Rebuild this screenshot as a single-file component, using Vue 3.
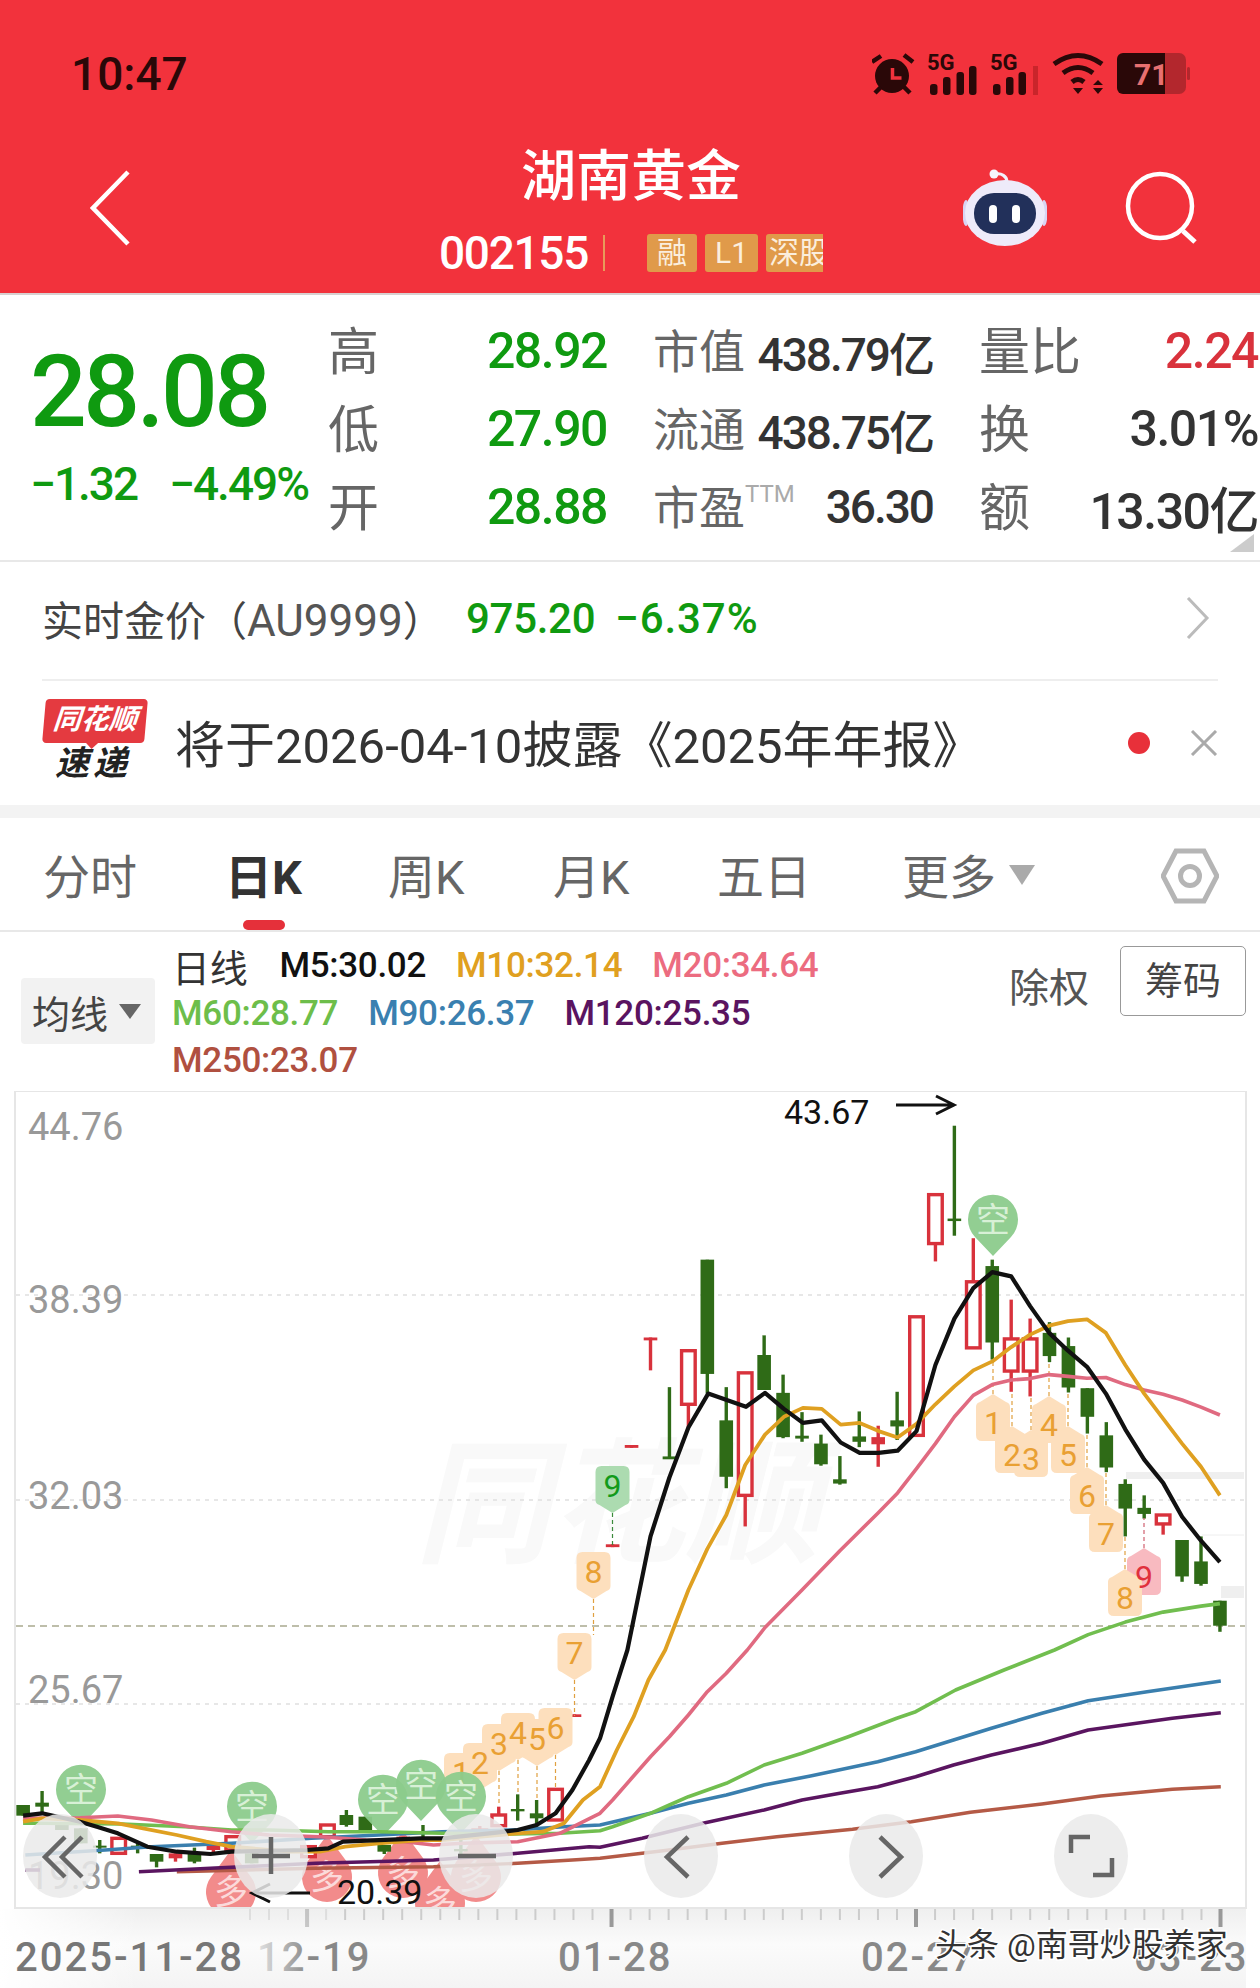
<script setup>
const z4 = (p) => [600 + p[0] / 2.376, 1090 + p[1] / 2.8]
const z5 = (p) => [p[0] / 2.376, 1650 + p[1] / 3]
const z6 = (p) => [600 + p[0] / 2.376, 1650 + p[1] / 3]
const toPts = (arr) => arr.map((p) => p[0].toFixed(1) + ',' + p[1].toFixed(1)).join(' ')

const lines = [
  { c: '#b45a46', w: 3.4, pts: [[[420,665],[750,655],[1030,650],[1230,640],[1360,630]].map(z5), [[0,625],[150,602],[290,580],[420,560],[600,538],[740,515],[880,487],[1050,462],[1190,438],[1360,418],[1475,410]].map(z6)].flat() },
  { c: '#5a1560', w: 3.6, pts: [[[330,665],[500,655],[750,640],[1030,630],[1230,610],[1400,590]].map(z5), [[0,592],[100,565],[250,518],[390,480],[480,450],[570,430],[660,410],[750,380],[840,345],[930,315],[1050,280],[1160,240],[1360,205],[1475,188]].map(z6)].flat() },
  { c: '#5a1560', w: 3.6, pts: [[60,660],[95,660]].map(z5) },
  { c: '#3a7fae', w: 3.6, pts: [[[60,615],[250,600],[360,590],[550,580],[740,565],[900,555],[1050,545],[1220,540],[1340,530]].map(z5), [[0,525],[120,490],[210,460],[300,435],[390,405],[500,378],[660,335],[750,305],[840,270],[930,235],[1050,190],[1160,152],[1300,125],[1475,93]].map(z6)].flat() },
  { c: '#71be4f', w: 3.6, pts: [[[55,520],[100,520],[290,522],[440,530],[550,540],[640,540],[780,545],[900,545],[1050,550],[1220,552],[1330,550]].map(z5), [[0,542],[30,530],[75,510],[120,490],[165,465],[210,440],[300,400],[390,345],[480,310],[590,260],[705,205],[750,185],[845,120],[960,60],[1080,0]].map(z6), [[1160,1525],[1248,1490],[1338,1462],[1428,1445],[1473,1438]].map(z4)].flat() },
  { c: '#e06a80', w: 3.6, pts: [[[55,505],[190,503],[280,498],[360,510],[450,530],[550,545],[640,555],[760,560],[870,570],[960,575],[1030,585],[1100,580],[1230,575],[1330,550],[1410,500]].map(z5), [[0,490],[30,450],[75,385],[120,320],[165,260],[210,195],[255,125],[300,70],[350,0]].map(z6), [[392,1505],[480,1400],[570,1290],[660,1185],[707,1128],[752,1060],[797,990],[842,915],[887,855],[932,825],[977,812],[1022,808],[1067,797],[1112,802],[1157,807],[1202,805],[1248,825],[1293,840],[1338,852],[1383,868],[1428,888],[1473,910]].map(z4)].flat() },
  { c: '#dfa021', w: 3.8, pts: [[[55,515],[100,505],[190,510],[280,520],[340,535],[420,555],[490,575],[550,590],[690,605],[760,605],[820,590],[900,580],[1000,570],[1050,570],[1230,550],[1290,545],[1340,520],[1385,450]].map(z5), [[0,410],[40,300],[80,200],[115,90],[155,0]].map(z6), [[210,1400],[255,1285],[300,1190],[345,1050],[392,965],[437,915],[482,890],[527,893],[572,937],[617,932],[662,955],[707,973],[752,935],[797,880],[842,830],[887,785],[932,760],[977,720],[1022,685],[1067,660],[1112,647],[1157,642],[1202,680],[1248,770],[1293,850],[1338,920],[1383,990],[1428,1055],[1473,1135]].map(z4)].flat() },
  { c: '#111', w: 4.2, pts: [[[55,497],[100,490],[190,515],[230,530],[280,550],[350,590],[420,605],[500,612],[550,605],[730,600],[780,595],[815,575],[1000,565],[1050,565],[1185,547],[1230,540],[1275,525],[1320,490],[1360,420],[1400,330]].map(z5), [[0,265],[30,140],[65,0]].map(z6), [[120,1250],[165,1085],[210,945],[257,850],[347,887],[392,848],[437,893],[482,932],[527,925],[572,987],[617,1016],[662,1016],[707,1010],[752,955],[797,770],[842,640],[887,555],[932,510],[977,522],[1022,605],[1067,680],[1112,730],[1157,775],[1202,850],[1248,950],[1293,1035],[1338,1100],[1383,1195],[1428,1262],[1473,1322]].map(z4)].flat() },
].map((l) => ({ c: l.c, w: l.w, pts: toPts(l.pts) }))

const c4 = [
  [30,1272,1280,null,null,'f'],[75,994,1002,null,null,'f'],[120,693,701,693,785,'f'],
  [165,1026,1034,832,1030,'g'],[210,730,880,null,945,'r'],[255,475,795,null,850,'g'],
  [300,925,1083,832,1115,'g'],[345,792,1135,null,1222,'r'],[390,742,840,687,null,'g'],
  [435,848,972,797,975,'g'],[480,968,976,902,985,'g'],[525,990,1048,965,1052,'g'],
  [570,1090,1102,1025,1105,'g'],[616,970,985,900,1000,'g'],[661,972,992,940,1055,'f'],
  [706,925,942,845,980,'g'],[752,635,967,null,null,'r'],[797,293,430,null,480,'r'],
  [842,360,367,100,408,'g'],[887,537,722,415,null,'r'],[932,493,707,475,755,'g'],
  [977,697,787,587,845,'r'],[1022,697,787,640,858,'r'],[1068,680,745,650,762,'g'],
  [1113,717,833,693,847,'g'],[1158,835,915,null,962,'g'],[1203,967,1057,930,1070,'g'],
  [1248,1103,1172,1090,1250,'g'],[1293,1170,1187,1135,1200,'g'],[1338,1190,1215,null,1245,'r'],
  [1383,1260,1362,null,1377,'g'],[1428,1320,1383,1250,1388,'g'],[1473,1430,1500,null,1517,'g'],
]
const c5 = [
  [1365,193,201,null,null,'f'],[1320,418,510,null,null,'r'],[1275,490,505,450,530,'g'],
  [1230,477,484,433,512,'g'],[1185,495,527,470,null,'r'],[1140,540,552,528,null,'r'],
  [1095,597,604,570,615,'g'],[1005,565,572,525,null,'g'],[958,560,575,null,null,'f'],
  [913,585,605,null,612,'g'],[868,500,545,null,null,'g'],[823,495,525,480,530,'g'],
  [778,525,560,null,null,'r'],[733,590,620,null,null,'r'],[598,610,640,null,null,'g'],
  [553,560,600,null,null,'r'],[507,585,600,null,615,'f'],[462,610,635,593,640,'g'],
  [417,610,625,null,635,'f'],[372,612,635,null,652,'g'],[327,587,593,575,610,'g'],
  [282,565,610,null,null,'r'],[237,587,593,570,610,'g'],[192,535,580,null,null,'g'],
  [147,525,540,null,null,'g'],[100,458,470,423,490,'g'],[55,465,497,null,null,'g'],
]
const candles = [...c4.map((c) => [c, z4]), ...c5.map((c) => [c, z5])].map(([c, z]) => {
  const x = z([c[0], 0])[0]
  const y = (v) => z([0, v])[1]
  const top = y(c[1]); const bot = y(c[2])
  return {
    x, top, h: bot - top,
    wt: c[3] == null ? top : y(c[3]),
    wb: c[4] == null ? bot : y(c[4]),
    t: c[5],
  }
})

function tipDown(cx, top) {
  const l = cx - 17; const r = cx + 17; const b = top + 38
  return `M${l + 6} ${top}H${r - 6}Q${r} ${top} ${r} ${top + 6}V${b - 4}Q${r} ${b} ${r - 4} ${b + 1}L${cx} ${b + 9}L${l + 4} ${b + 1}Q${l} ${b} ${l} ${b - 4}V${top + 6}Q${l} ${top} ${l + 6} ${top}Z`
}
function tipUp(cx, top) {
  const l = cx - 17; const r = cx + 17; const t = top + 9; const b = t + 38
  return `M${cx} ${top}L${r - 4} ${t - 1}Q${r} ${t} ${r} ${t + 4}V${b - 6}Q${r} ${b} ${r - 6} ${b}H${l + 6}Q${l} ${b} ${l} ${b - 6}V${t + 4}Q${l} ${t} ${l + 4} ${t - 1}Z`
}
const O = { bg: '#fddfbd', fg: '#e9a033' }
const badges = [
  { n: 1, x: 461, cy: 1772, dir: 'd', ...O }, { n: 2, x: 480, cy: 1762, dir: 'd', ...O },
  { n: 3, x: 499, cy: 1743, dir: 'd', conn: 1806, ...O }, { n: 5, x: 537, cy: 1738, dir: 'd', conn: 1800, ...O },
  { n: 4, x: 518, cy: 1732, dir: 'd', conn: 1794, ...O }, { n: 6, x: 555.5, cy: 1727, dir: 'd', conn: 1788, ...O },
  { n: 7, x: 574.5, cy: 1652, dir: 'd', conn: 1716, ...O }, { n: 8, x: 593.5, cy: 1571, dir: 'd', conn: 1635, ...O },
  { n: 9, x: 612.5, cy: 1485, dir: 'd', conn: 1546, bg: '#acdbb0', fg: '#129a1a', dash: '#3b8a3b' },
  { n: 1, x: 993, cy: 1422, dir: 'u', conn: 1360, ...O }, { n: 4, x: 1049, cy: 1424, dir: 'u', conn: 1362, ...O },
  { n: 2, x: 1012, cy: 1454, dir: 'u', conn: 1392, ...O }, { n: 5, x: 1068, cy: 1454, dir: 'u', conn: 1392, ...O },
  { n: 3, x: 1031, cy: 1458, dir: 'u', conn: 1396, ...O }, { n: 6, x: 1087, cy: 1495, dir: 'u', conn: 1433, ...O },
  { n: 7, x: 1106, cy: 1533, dir: 'u', conn: 1472, ...O }, { n: 9, x: 1144, cy: 1576, dir: 'u', conn: 1518, bg: '#f8bac0', fg: '#e0303c', dash: '#d06070' },
  { n: 8, x: 1125, cy: 1597, dir: 'u', conn: 1536, ...O },
].map((b) => ({
  ...b,
  dash: b.dash || '#e0a040',
  d: b.dir === 'd' ? tipDown(b.x, b.cy - 19) : tipUp(b.x, b.cy - 28),
  connEnd: b.conn ? (b.dir === 'd' ? b.cy + 28 : b.cy - 28) : null,
}))

const kong = [[81, 1790], [252, 1807], [383, 1800], [421, 1785], [461, 1797], [993, 1220]]
const duo = [[231, 1892], [327, 1877], [403, 1873], [440, 1903], [476, 1877]]

const ticks = Array.from({ length: 52 }, (_, k) => ({
  x: 1220.5 - 19.03 * k,
  long: k % 16 === 0,
  op: k > 46 ? 0.5 : 1,
}))
const axis = [['44.76', 1126], ['38.39', 1299], ['32.03', 1495], ['25.67', 1689], ['19.30', 1875]]
const grid = [1295, 1500, 1704]
const dates = [['2025-11-28', 15, '#777'], ['12-19', 257, 'url(#dateFade)'], ['01-28', 558, '#888'], ['02-27', 861, '#888'], ['03-23', 1134, '#888']]
const buttons = [60, 271, 476, 681, 886, 1091]
const stats = [
  [{ l: '高', v: '28.92', c: 'green' }, { l: '市值', v: '438.79亿' }, { l: '量比', v: '2.24', c: 'red' }],
  [{ l: '低', v: '27.90', c: 'green' }, { l: '流通', v: '438.75亿' }, { l: '换', v: '3.01%' }],
  [{ l: '开', v: '28.88', c: 'green' }, { l: '市盈', sup: 'TTM', v: '36.30' }, { l: '额', v: '13.30亿' }],
].flat()
const tabs = ['分时', '日K', '周K', '月K', '五日', '更多']
</script>

<template>
  <div class="page">
    <header class="head">
      <div class="status">
        <span class="clock">10:47</span>
        <svg class="status-icons" width="318" height="54" viewBox="872 48 318 54">
          <circle cx="892" cy="77" r="17" fill="#2a0808" />
          <path d="M892.5 69v10h9" fill="none" stroke="#f2323c" stroke-width="3.5" />
          <path d="M872 63l9-6M913 63l-9-7M875 94l6-6M910 94l-6-6" stroke="#2a0808" stroke-width="4.5" fill="none" />
          <text x="927" y="71" class="five">5G</text>
          <rect x="930" y="85" width="7.5" height="11" rx="3" class="bar" />
          <rect x="943" y="78" width="7.5" height="18" rx="3" class="bar" />
          <rect x="956.5" y="73" width="7.5" height="23" rx="3" class="bar" />
          <rect x="969" y="67" width="7.5" height="29" rx="3" class="bar" />
          <text x="990" y="71" class="five">5G</text>
          <rect x="993" y="85" width="7.5" height="11" rx="3" class="bar" />
          <rect x="1006" y="78" width="7.5" height="18" rx="3" class="bar" />
          <rect x="1018.5" y="73" width="7.5" height="23" rx="3" class="bar" />
          <rect x="1033" y="67" width="5" height="29" fill="#c9252b" />
          <path d="M1054 65q24-17 48 0M1063 74q15-11 30 0M1072 83q6-5 12 0" fill="none" stroke="#2a0808" stroke-width="5" />
          <path d="M1073 89h10l-5 6zM1093 86h10l-5-5zM1093 89h10l-5 6z" fill="#2a0808" />
          <path d="M1165 54h14a7 7 0 0 1 7 7v27a7 7 0 0 1-7 7h-14z" fill="#b3272d" />
          <rect x="1187" y="68" width="3" height="13" rx="1.5" fill="#b3272d" />
          <path d="M1123 54h42v41h-42a6 6 0 0 1-6-6v-29a6 6 0 0 1 6-6z" fill="#2a0808" />
          <text x="1134" y="86" class="batt">71</text>
        </svg>
      </div>
      <div class="nav">
        <svg class="back" width="40" height="76" viewBox="0 0 40 76"><path d="M38 2L3 38l35 36" fill="none" stroke="#fff" stroke-width="4.5" /></svg>
        <div class="center">
          <div class="title">湖南黄金</div>
          <div class="code-row">
            <span class="code">002155</span>
            <i class="sep"></i>
            <span class="tag">融</span>
            <span class="tag">L1</span>
            <span class="tag clip">深股通</span>
          </div>
        </div>
        <div class="nav-right">
          <svg class="robot" width="84" height="78" viewBox="963 168 84 78">
            <path d="M1007 181c0-6-6-9-11-8" fill="none" stroke="#f3f0fb" stroke-width="3" />
            <circle cx="994" cy="173" r="4.5" fill="#f6f4fd" />
            <ellipse cx="966" cy="212" rx="3.5" ry="13" fill="#d9d4f3" />
            <ellipse cx="1044" cy="212" rx="3.5" ry="13" fill="#d9d4f3" />
            <ellipse cx="1005" cy="212" rx="40" ry="33" fill="#eeebfa" />
            <rect x="974" y="192" width="62" height="41" rx="20" fill="#22305a" />
            <rect x="989" y="204" width="8" height="18" rx="4" fill="#fff" />
            <rect x="1012" y="204" width="8" height="18" rx="4" fill="#fff" />
          </svg>
          <svg class="search" width="72" height="73" viewBox="1125 172 72 73"><circle cx="1160" cy="207" r="32" fill="none" stroke="#fff" stroke-width="4.5" /><path d="M1183 232l12 11" stroke="#fff" stroke-width="5" /></svg>
        </div>
      </div>
    </header>

    <section class="quote">
      <div class="price-box">
        <div class="price">28.08</div>
        <div class="change"><span>−1.32</span><span>−4.49%</span></div>
      </div>
      <div class="stats">
        <div v-for="s in stats" :key="s.l" class="cell">
          <span class="lab">{{ s.l }}<sup v-if="s.sup" class="ttm">{{ s.sup }}</sup></span>
          <span class="val" :class="s.c">{{ s.v }}</span>
        </div>
      </div>
      <i class="corner"></i>
    </section>

    <div class="gold">
      <span class="gold-name">实时金价（<span class="au">AU9999</span>）</span>
      <span class="gold-val">975.20</span>
      <span class="gold-pct">−6.37%</span>
      <svg class="chev" width="24" height="42" viewBox="0 0 24 42"><path d="M2 1l19 20L2 41" fill="none" stroke="#bbb" stroke-width="3" /></svg>
    </div>

    <div class="notice">
      <div class="logo">
        <div class="logo-top">同花顺</div>
        <div class="logo-bot">速递</div>
      </div>
      <span class="notice-text">将于<span class="num">2026-04-10</span>披露《<span class="num">2025</span>年年报》</span>
      <i class="dot"></i>
      <svg class="close" width="28" height="26" viewBox="0 0 28 26"><path d="M2 1l24 24M26 1L2 25" stroke="#aaa" stroke-width="3" /></svg>
    </div>
    <div class="band"></div>

    <nav class="tabs">
      <span v-for="t in tabs" :key="t" class="tab" :class="{ on: t === '日K' }">{{ t }}</span>
      <i class="more-tri"></i>
      <svg class="hex" width="58" height="56" viewBox="0 0 58 56"><path d="M2 28L15 3h28l13 25-13 25H15z" fill="none" stroke="#b5b5b5" stroke-width="5" /><circle cx="29" cy="28" r="9.5" fill="none" stroke="#b5b5b5" stroke-width="5" /></svg>
    </nav>

    <section class="legend">
      <div class="ma-btn">均线<i class="ma-tri"></i></div>
      <div class="ma-lines">
        <div class="ma-line"><span class="daily">日线</span><span class="m5">M5:30.02</span><span class="m10">M10:32.14</span><span class="m20">M20:34.64</span></div>
        <div class="ma-line"><span class="m60">M60:28.77</span><span class="m90">M90:26.37</span><span class="m120">M120:25.35</span></div>
        <div class="ma-line"><span class="m250">M250:23.07</span></div>
      </div>
      <span class="chuquan">除权</span>
      <span class="chouma">筹码</span>
    </section>

    <svg class="chart" width="1260" height="897" viewBox="0 1091 1260 897">
      <defs>
        <clipPath id="plot"><rect x="16" y="1092" width="1229" height="815" /></clipPath>
        <linearGradient id="bandV" x1="0" y1="0" x2="0" y2="1">
          <stop offset="0" stop-color="#efefef" /><stop offset=".45" stop-color="#fbfbfb" /><stop offset="1" stop-color="#f4f4f4" />
        </linearGradient>
        <linearGradient id="bandH" x1="0" y1="0" x2="1" y2="0">
          <stop offset="0" stop-color="#fff" /><stop offset="1" stop-color="#fff" stop-opacity="0" />
        </linearGradient>
        <linearGradient id="dateFade" gradientUnits="userSpaceOnUse" x1="257" y1="0" x2="310" y2="0">
          <stop offset="0" stop-color="#e2e2e2" /><stop offset="1" stop-color="#888" />
        </linearGradient>
      </defs>

      <rect x="15" y="1091" width="1231" height="817" fill="#fff" stroke="#e6e6e6" stroke-width="2" />
      <text x="415" y="1552" class="logo-mark">同花顺</text>
      <rect x="1126" y="1472" width="118" height="7" fill="#efefef" />
      <rect x="1221" y="1586" width="23" height="12" fill="#efefef" />
      <line x1="1202" y1="1535" x2="1244" y2="1535" stroke="#eee" stroke-width="1" />
      <line v-for="g in grid" :key="g" x1="16" x2="1245" :y1="g" :y2="g" stroke="#e0e0e0" stroke-width="1.5" stroke-dasharray="4 5" />
      <line x1="16" x2="1245" y1="1626" y2="1626" stroke="#a9a98e" stroke-width="1.5" stroke-dasharray="7 5" />
      <text v-for="a in axis" :key="a[0]" x="28" :y="a[1] + 14" class="axis">{{ a[0] }}</text>

      <g clip-path="url(#plot)">
        <g v-for="(p, i) in duo" :key="'d' + i">
          <path :d="`M${p[0]} ${p[1] - 42}L${p[0] + 20} ${p[1] - 15}A25 25 0 1 1 ${p[0] - 20} ${p[1] - 15}Z`" fill="#f28b8b" />
          <text :x="p[0]" :y="p[1] + 12" class="pin-t duo">多</text>
        </g>
        <g v-for="(c, i) in candles" :key="'c' + i">
          <line :x1="c.x" :x2="c.x" :y1="c.wt" :y2="c.wb" :stroke="c.t === 'g' ? '#2f6b17' : '#d8323c'" stroke-width="3.4" />
          <rect v-if="c.t === 'r'" :x="c.x - 6.8" :y="c.top" width="13.6" :height="c.h" fill="#fff" stroke="#d8323c" stroke-width="3.4" />
          <rect v-else :x="c.x - 6.8" :y="c.top" width="13.6" :height="c.h" :fill="c.t === 'g' ? '#2f6b17' : '#d8323c'" />
        </g>
        <g v-for="(b, i) in badges" :key="'b' + i">
          <line v-if="b.conn" :x1="b.x" :x2="b.x" :y1="b.connEnd" :y2="b.conn" :stroke="b.dash" stroke-width="1.2" stroke-dasharray="4 3" />
          <path :d="b.d" :fill="b.bg" />
        </g>
        <text v-for="(b, i) in badges" :key="'n' + i" :x="b.x" :y="b.cy + 12" class="badge-t" :fill="b.fg">{{ b.n }}</text>
        <g v-for="(p, i) in kong" :key="'k' + i">
          <path :d="`M${p[0]} ${p[1] + 36}L${p[0] - 18} ${p[1] + 17}A25 25 0 1 1 ${p[0] + 18} ${p[1] + 17}Z`" fill="#8ccb8c" fill-opacity=".95" />
          <text :x="p[0]" :y="p[1] + 12" class="pin-t kong">空</text>
        </g>
        <polyline v-for="(l, i) in lines" :key="'l' + i" :points="l.pts" fill="none" :stroke="l.c" :stroke-width="l.w" stroke-linejoin="round" />
      </g>

      <text x="784" y="1124" class="note">43.67</text>
      <path d="M896 1105h58M936 1096l18 9-18 9" fill="none" stroke="#111" stroke-width="3" />
      <text x="337" y="1904" class="note">20.39</text>
      <path d="M310 1893h-58M270 1884l-18 9 18 9" fill="none" stroke="#111" stroke-width="3" />

      <ellipse v-for="b in buttons" :key="b" :cx="b" cy="1856" rx="37" ry="42" fill="#eaeaea" fill-opacity=".85" />
      <g fill="none" stroke="#666" stroke-width="4.5">
        <path d="M65 1837l-20 20 20 20M82 1837l-20 20 20 20" />
        <path d="M252 1856h38M271 1837v37" />
        <path d="M458 1856h38" />
        <path d="M688 1837l-21 20 21 20" />
        <path d="M880 1837l21 20-21 20" />
        <path d="M1071 1853v-16h19M1112 1858v17h-19" />
      </g>

      <rect x="0" y="1909" width="1246" height="79" fill="url(#bandV)" />
      <rect x="0" y="1909" width="140" height="79" fill="url(#bandH)" />
      <line v-for="t in ticks" :key="t.x" :x1="t.x" :x2="t.x" y1="1909" :y2="t.long ? 1927 : 1920" :stroke="t.long ? '#999' : '#ccc'" :stroke-width="t.long ? 4 : 2" :opacity="t.op" />
      <text v-for="d in dates" :key="d[0]" :x="d[1]" y="1971" class="date" :fill="d[2]">{{ d[0] }}</text>
      <text x="935" y="1956" class="wm">头条 @南哥炒股养家</text>
    </svg>
  </div>
</template>

<style>
html, body { margin: 0; background: #fff; }
</style>

<style scoped>
.page {
  width: 1260px;
  height: 1988px;
  overflow: hidden;
  background: #fff;
  font-family: Roboto, "Noto Sans CJK SC", sans-serif;
  color: #333;
}
.head {
  height: 293px;
  box-sizing: content-box;
  background: #f2323c;
  border-bottom: 2px solid #d8d0d0;
}
.status {
  display: flex;
  justify-content: space-between;
  align-items: center;
  height: 50px;
  padding: 49px 70px 0 71px;
}
.clock { font-size: 46px; font-weight: 500; color: #2a0808; }
.five { font: 700 22px Roboto, sans-serif; fill: #2a0808; }
.bar { fill: #2a0808; }
.batt { font: 700 30px Roboto, sans-serif; fill: #e87070; }
.nav {
  display: grid;
  grid-template-columns: 1fr auto 1fr;
  align-items: center;
  padding: 44px 63px 0 65px;
}
.back { justify-self: start; margin-left: 25px; display: block; }
.center { display: flex; flex-direction: column; align-items: center; }
.title { font-size: 55px; line-height: 66px; font-weight: 500; color: #fff; }
.code-row { display: flex; align-items: center; margin-top: 25px; color: #fff; }
.code { font-size: 46px; line-height: 38px; letter-spacing: -1.3px; font-weight: 500; }
.sep { width: 2px; height: 36px; background: #e89a5a; margin: 0 42px 0 15px; }
.tag {
  height: 38px;
  width: 50px;
  margin-right: 8px;
  background: #e09a4a;
  border-radius: 3px;
  font-size: 30px;
  line-height: 38px;
  text-align: center;
  color: #fbeedd;
  overflow: hidden;
  white-space: nowrap;
}
.tag:nth-of-type(3) { width: 53px; }
.tag.clip { width: 57px; margin-right: 0; border-radius: 3px 0 0 3px; text-align: left; padding-left: 3px; box-sizing: border-box; }
.nav-right { display: flex; justify-content: flex-end; align-items: center; gap: 78px; }
.robot, .search { display: block; }

.quote {
  position: relative;
  display: flex;
  height: 267px;
  box-sizing: border-box;
  padding: 17px 0 0 30px;
  border-bottom: 2px solid #e8e8e8;
}
.price-box { width: 298px; color: #0f9a10; }
.price { font-size: 100px; line-height: 116px; margin-top: 22px; font-weight: 500; letter-spacing: -3.5px; }
.change { display: flex; gap: 32px; font-size: 46px; line-height: 54px; letter-spacing: -2px; margin-top: 7px; white-space: nowrap; font-weight: 500; }
.stats {
  display: grid;
  grid-template-columns: 279px 280px 279px;
  grid-auto-rows: 78px;
  column-gap: 46px;
}
.cell { display: flex; justify-content: space-between; align-items: center; white-space: nowrap; }
.lab { font-size: 51px; color: #666; margin-bottom: 6px; }
.cell:nth-child(3n+2) .lab { font-size: 46px; }
.ttm { font-size: 24px; color: #aaa; vertical-align: 22px; line-height: 0; letter-spacing: 0; }
.val { font-size: 50px; font-weight: 500; letter-spacing: -1.5px; color: #333; }
.cell:nth-child(3n+2) .val { font-size: 46px; letter-spacing: -2px; }
.val.green { color: #0f9a10; }
.val.red { color: #d9323c; }
.corner {
  position: absolute;
  right: 6px;
  bottom: 8px;
  width: 0;
  height: 0;
  border-left: 24px solid transparent;
  border-bottom: 18px solid #ccc;
}
.gold {
  display: flex;
  align-items: center;
  height: 119px;
  margin: 0 42px;
  padding-bottom: 5px;
  border-bottom: 2px solid #eee;
  font-size: 42px;
  box-sizing: border-box;
}
.gold-name { width: 424px; color: #444; font-size: 41px; white-space: nowrap; }
.au { font-size: 44px; color: #555; }
.gold-val, .gold-pct { color: #0f9a10; font-weight: 500; letter-spacing: -.3px; }
.gold-pct { margin-left: 20px; letter-spacing: .9px; }
.chev { margin-left: auto; margin-right: 8px; }
.notice { display: flex; align-items: center; height: 124px; padding: 0 42px 0 44px; box-sizing: border-box; }
.logo { width: 102px; margin-bottom: 4px; }
.logo-top {
  position: relative;
  height: 44px;
  background: #e43a40;
  border-radius: 4px;
  transform: skewX(-5deg);
  text-align: center;
  font-size: 28px;
  line-height: 42px;
  font-weight: 700;
  font-style: italic;
  color: #fff;
  white-space: nowrap;
}
.logo-top::after {
  content: "";
  position: absolute;
  left: 43px;
  bottom: -6px;
  border-left: 7px solid transparent;
  border-right: 7px solid transparent;
  border-top: 7px solid #e43a40;
}
.logo-bot { font-size: 34px; line-height: 40px; letter-spacing: 4px; font-weight: 700; font-style: italic; color: #222; text-align: left; padding-left: 11px; }
.notice-text { margin: 0 0 4px 29px; font-size: 50px; color: #333; white-space: nowrap; }
.num { font-size: 49px; }
.dot { width: 22px; height: 22px; border-radius: 50%; background: #e8303a; margin-left: auto; margin-right: 40px; }
.band { height: 13px; background: #f3f3f3; }
.tabs {
  position: relative;
  display: grid;
  grid-template-columns: 182px 163px 165px 164px 185px auto;
  align-items: center;
  height: 114px;
  box-sizing: border-box;
  padding: 0 0 2px 43px;
  border-bottom: 2px solid #e8e8e8;
}
.tab { font-size: 47px; color: #666; white-space: nowrap; }
.tab.on { color: #333; font-weight: 700; }
.tab.on::after {
  content: "";
  position: absolute;
  left: 243px;
  top: 102px;
  width: 42px;
  height: 10px;
  border-radius: 5px;
  background: #e5303a;
}
.more-tri {
  position: absolute;
  left: 1009px;
  top: 47px;
  border-left: 13px solid transparent;
  border-right: 13px solid transparent;
  border-top: 20px solid #aaa;
}
.hex { position: absolute; left: 1161px; top: 30px; }
.legend { position: relative; display: flex; height: 159px; box-sizing: border-box; padding: 10px 0 0 21px; }
.ma-btn {
  display: flex;
  align-items: center;
  width: 134px;
  height: 66px;
  margin-top: 36px;
  box-sizing: border-box;
  padding-left: 11px;
  border-radius: 4px;
  background: #f2f2f2;
  font-size: 38px;
  color: #444;
}
.ma-tri {
  margin-left: 11px;
  border-left: 11px solid transparent;
  border-right: 11px solid transparent;
  border-top: 15px solid #666;
}
.ma-lines { margin-left: 17px; }
.ma-line { display: flex; gap: 30px; height: 47.5px; align-items: center; font-size: 35px; letter-spacing: -.3px; font-weight: 500; }
.daily { font-size: 38px; font-weight: 400; color: #333; margin-right: 2px; }
.m5 { color: #111; }
.m10 { color: #e0a020; }
.m20 { color: #ec6c80; }
.m60 { color: #6dbe4a; }
.m90 { color: #3a80b0; }
.m120 { color: #5a1460; }
.m250 { color: #b05040; }
.chuquan { position: absolute; left: 1009px; top: 24px; font-size: 40px; color: #555; }
.chouma {
  position: absolute;
  left: 1120px;
  top: 14px;
  width: 126px;
  height: 70px;
  box-sizing: border-box;
  border: 1.5px solid #999;
  border-radius: 5px;
  text-align: center;
  font-size: 38px;
  line-height: 68px;
  color: #444;
}
.chart { display: block; }
.chart text { font-family: Roboto, "Noto Sans CJK SC", sans-serif; }
.logo-mark { font-size: 135px; font-weight: 700; font-style: italic; fill: #f9f9f9; }
.axis { font-size: 38px; fill: #999; }
.pin-t { font-size: 34px; text-anchor: middle; }
.kong { fill: #d8f0d6; }
.duo { fill: #fbdada; }
.badge-t { font-size: 32px; text-anchor: middle; }
.note { font-size: 34px; fill: #111; }
.date { font-size: 40px; letter-spacing: 2px; font-weight: 500; }
.wm { font-size: 32px; fill: #333; stroke: #fff; stroke-width: 3px; paint-order: stroke; }
</style>
